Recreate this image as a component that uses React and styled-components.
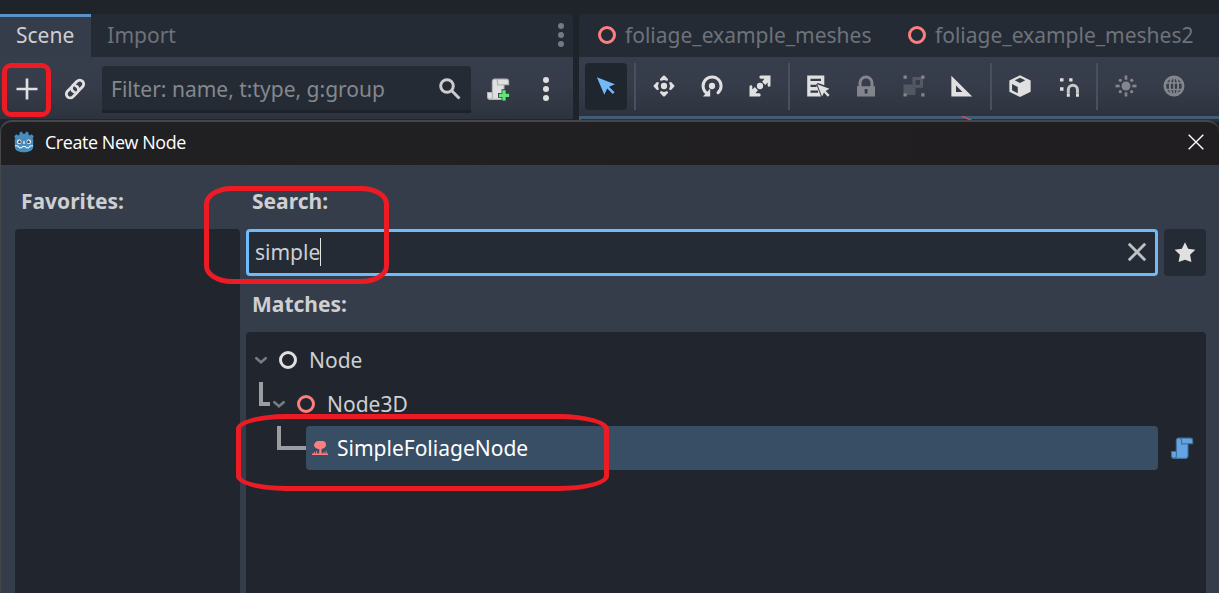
import React from "react";
import styled, { createGlobalStyle } from "styled-components";

const Global = createGlobalStyle`
  * { box-sizing: border-box; }
  body { margin: 0; background: #1f242c; overflow: hidden; }
`;

const c = {
  window: "#1f242b",
  tabBar: "#252b34",
  panel: "#363d4a",
  list: "#21262e",
  text: "#cdcfd2",
  muted: "#6d727b",
  accent: "#70bafa",
  icon: "#e0e0e0",
  node3d: "#fc7f7f",
  red: "#ed1c24",
};

const Editor = styled.div`
  position: relative;
  width: 1219px;
  height: 593px;
  overflow: hidden;
  padding-top: 14px;
  display: flex;
  align-items: flex-start;
  gap: 6px;
  background: ${c.window};
  color: ${c.text};
  font: 21px/30px "Noto Sans", sans-serif;
  white-space: nowrap;
`;

const Dock = styled.section`
  flex: ${(p) => (p.$width ? `0 0 ${p.$width}px` : "1 1 0")};
  min-width: 0;
  height: 108px;
  display: flex;
  flex-direction: column;
  overflow: hidden;
  border-radius: ${(p) => (p.$width ? "0 5px 0 0" : "5px 0 0 0")};
`;

const TabBar = styled.div`
  height: 43px;
  display: flex;
  background: ${c.tabBar};
`;

const DockTab = styled.div`
  display: flex;
  align-items: center;
  padding: ${(p) => (p.$active ? "0 17px 4px 16px" : "0 16px 1px")};
  color: ${(p) => (p.$active ? c.text : c.muted)};
  background: ${(p) => (p.$active ? c.panel : "transparent")};
  border-top: ${(p) => (p.$active ? "3px solid #5792c9" : "0")};
`;

const SceneTab = styled.div`
  width: 310px;
  padding: 0 0 1px 16px;
  display: flex;
  align-items: center;
  gap: 6px;
  color: ${c.muted};
`;

const TabMenu = styled.div`
  margin-left: auto;
  width: 24px;
  padding-bottom: 1px;
  display: flex;
  align-items: center;
`;

const Toolbar = styled.div`
  flex: 1;
  display: flex;
  align-items: flex-start;
  gap: ${(p) => p.$gap || 0}px;
  padding: ${(p) => p.$pad};
  background: linear-gradient(#373e4b 0, #363c49 45%, #2d333e 100%);
`;

const ToolButton = styled.div`
  width: ${(p) => p.$width || 42}px;
  height: 47px;
  padding-bottom: 1px;
  flex: none;
  display: flex;
  align-items: center;
  justify-content: center;
  border-radius: 4px;
  background: ${(p) => (p.$pressed ? "#20262e" : "transparent")};
  opacity: ${(p) => (p.$disabled ? 0.45 : 1)};
`;

const Separator = styled.div`
  width: 4px;
  height: 47px;
  flex: none;
  border: solid transparent;
  border-width: 0 1px;
  background: #4a505c;
  background-clip: padding-box;
`;

const FilterField = styled.div`
  width: 369px;
  height: 47px;
  margin-left: 3px;
  display: flex;
  align-items: center;
  justify-content: space-between;
  padding: 2px 9px 0;
  border-radius: 4px 4px 0 0;
  border-bottom: 3px solid #1d222a;
  background: ${c.tabBar};
  color: #84888e;
`;

const ViewportEdge = styled.div`
  height: 6px;
  flex: none;
  padding-left: 380px;
  border-top: 3px solid #3f5d76;
  border-left: 2px solid #3f5d76;
  background: #2c3035;
`;

const DockEdge = styled.div`
  height: 3px;
  flex: none;
  background: #20252d;
`;

const Dialog = styled.div`
  position: absolute;
  left: 0;
  top: 120px;
  width: 1219px;
  height: 480px;
  border: 1px solid #454648;
  border-top-width: 2px;
  border-right-width: 0;
  border-radius: 12px 12px 0 0;
  overflow: hidden;
  background: ${c.panel};
`;

const TitleBar = styled.header`
  height: 43px;
  display: flex;
  align-items: center;
  padding: 0 15px 3px 12px;
  background: linear-gradient(90deg, #202022, #211e21);
  color: #fff;
`;

const Title = styled.h1`
  margin: 0 auto 0 10px;
  font: 400 17.9px/24px "Open Sans", "Noto Sans", sans-serif;
  letter-spacing: -0.4px;
`;

const Body = styled.div`
  display: grid;
  grid-template-columns: 225px 960px;
  column-gap: 6px;
  padding: 21px 0 0 14px;
`;

const Column = styled.div`
  display: flex;
  flex-direction: column;
`;

const Label = styled.h2`
  margin: 0;
  padding: 0 0 0 6px;
  height: 43px;
  font-size: 21px;
  font-weight: 700;
  line-height: 30px;
`;

const MatchesLabel = styled(Label)`
  height: 56px;
  padding-top: 13px;
`;

const Panel = styled.div`
  height: ${(p) => p.$height}px;
  padding: 6px;
  border-radius: 4px 4px 0 0;
  background: ${c.list};
`;

const SearchRow = styled.div`
  display: flex;
  gap: 6px;
  height: 47px;
`;

const SearchField = styled.div`
  width: 912px;
  display: flex;
  align-items: center;
  padding: 0 6px 1px;
  border: 3px solid ${c.accent};
  border-radius: 4px;
  background: ${c.tabBar};
`;

const Caret = styled.span`
  width: 1px;
  height: 28px;
  margin-right: auto;
  background: #e3e4e6;
`;

const FavoriteButton = styled.div`
  width: 42px;
  padding-bottom: 1px;
  display: flex;
  align-items: center;
  justify-content: center;
  border-radius: 4px;
  background: ${c.tabBar};
`;

const Row = styled.div`
  height: 44px;
  display: flex;
  align-items: center;
`;

const Branch = styled.span`
  align-self: flex-start;
  width: ${(p) => p.$width}px;
  height: 24px;
  margin-left: ${(p) => p.$indent}px;
  border: solid #9b9da0;
  border-width: 0 0 4px 4px;
`;

const NodeIcon = styled.span`
  margin: 0 9px 0 6px;
`;

const Selected = styled.div`
  width: 852px;
  height: 44px;
  margin-right: 12px;
  padding-left: 5px;
  display: flex;
  align-items: center;
  gap: 8px;
  border-radius: 4px;
  background: #384e65;
  color: #fff;
`;

const Highlight = styled.div`
  position: absolute;
  left: ${(p) => p.$x}px;
  top: ${(p) => p.$y}px;
  width: ${(p) => p.$w}px;
  height: ${(p) => p.$h}px;
  border: 5px solid ${c.red};
  border-radius: ${(p) => p.$radius};
`;

const Glyph = styled.svg`
  display: block;
  flex: none;
`;

const Icon = ({ children, size = 24, ...rest }) => (
  <Glyph width={size} height={size} viewBox="0 0 16 16" fill={c.icon} {...rest}>
    {children}
  </Glyph>
);

const Ring = ({ color }) => (
  <Icon>
    <circle cx="8" cy="8" r="5" fill="none" stroke={color} strokeWidth="2" />
  </Icon>
);

const Dots = ({ color }) => (
  <Icon fill={color}>
    <circle cx="8" cy="2" r="2" />
    <circle cx="8" cy="8" r="2" />
    <circle cx="8" cy="14" r="2" />
  </Icon>
);

const AddIcon = () => (
  <Icon><path d="M7.1 1v6.1H1v1.8h6.1V15h1.8V8.9H15V7.1H8.9V1z" /></Icon>
);

const LinkIcon = () => (
  <Icon>
    <g fill="none" stroke={c.icon} strokeWidth="1.9" strokeLinecap="round" transform="rotate(-45 8 8)">
      <path d="M9.1 10.5H12.6a2.6 2.6 0 0 0 0-5.2H8.4a2.6 2.6 0 0 0-2.2 3.9" />
      <path d="M6.9 5.5H3.4a2.6 2.6 0 0 0 0 5.2H7.6a2.6 2.6 0 0 0 2.2-3.9" />
    </g>
  </Icon>
);

const SearchIcon = () => (
  <Icon>
    <g fill="none" stroke="#cbccce" strokeWidth="2">
      <circle cx="6" cy="6" r="4.2" />
      <path d="m9 9 5.3 5.3" />
    </g>
  </Icon>
);

const ScriptShape = ({ fill, edge }) => (
  <>
    <path d="M6 1.4h7.5a1.6 1.6 0 0 1 1.6 1.6v2.2H12v8a1.7 1.7 0 0 1-1.7 1.7H2.7A1.7 1.7 0 0 1 1 13.2V10.3h3.2V3A1.7 1.6 0 0 1 6 1.4z" fill={fill} stroke={edge} strokeWidth=".7" />
    <path d="M4.3 10v3.2a1.5 1.5 0 0 1-1.5 1.6M6 1.5a1.5 1.5 0 0 1 1.7 1.5v2.2H12" fill="none" stroke={edge} strokeWidth=".8" />
  </>
);

const ScriptAddIcon = () => (
  <Icon>
    <ScriptShape fill="#e0e0e0" edge="#b2b4b6" />
    <path d="M10.4 8.2h3.2v2.4H16v3.2h-2.4v2.2h-3.2v-2.2H8v-3.2h2.4z" fill="#343a46" />
    <path d="M10.9 8.8h2.2v2.3h2.3v2.2h-2.3v2.3h-2.2v-2.3H8.6v-2.2h2.3z" fill="#5fe878" />
  </Icon>
);

const SelectIcon = () => (
  <Icon fill={c.accent}><path d="m1.9 2.1 5 11.7 1.9-4.1 3.7 3.7 1.2-1.2-3.7-3.7L14 6.9z" /></Icon>
);

const MoveIcon = () => (
  <Icon>
    <circle cx="8" cy="8" r="2.1" />
    <g stroke={c.icon} strokeWidth="1.6" strokeLinejoin="round">
      {[0, 90, 180, 270].map((a) => (
        <path key={a} d="M6.1 3.7 8 1.8l1.9 1.9L8 3z" transform={`rotate(${a} 8 8)`} />
      ))}
    </g>
  </Icon>
);

const RotateIcon = () => (
  <Icon>
    <circle cx="8" cy="8" r="2.1" />
    <path d="M4 12.4A6 6 0 1 1 12 12.5" fill="none" stroke={c.icon} strokeWidth="2" strokeLinecap="round" />
    <path d="M6.8 9.6V15H2z" />
  </Icon>
);

const ScaleIcon = () => (
  <Icon>
    <circle cx="8" cy="8" r="2.1" />
    {[0, 180].map((a) => (
      <path key={a} d="M8.6 1H15v6.400a.9.9 0 0 1-1.900.3V5.700l-1.600 1.600-2.100-2.100L11 3.100H8.600A1 1 0 0 1 8.600 1z" transform={`rotate(${a} 8 8)`} />
    ))}
  </Icon>
);

const ListSelectIcon = () => (
  <Icon>
    <path fillRule="evenodd" d="M.8 1h11.4v6.5L8 6 6.8 6.8 8.5 11.2 10 15H.8zM3 3.2v1.5h7V3.2zM3 7.1v1.5h4V7.1zM3 11v1.5h5V11z" />
    <path d="m7.5 6.8 3.2 8.2 1.3-2.7 2.5 2.9 1.2-1.2-2.6-2.6 2.5-1.5z" />
  </Icon>
);

const LockIcon = () => (
  <Icon>
    <path fillRule="evenodd" d="M2 8.2h1V6a5 5 0 0 1 10 0v2.2h1V15H2zM5 8.2h6V6a3 3 0 0 0-6 0zM7.1 10v3h1.9v-3z" />
  </Icon>
);

const GroupIcon = () => (
  <Icon>
    <path d="M1 1h2.2v2.2H1zM12.8 1H15v2.2h-2.2zM1 12.8h2.2V15H1zM12.8 12.8H15V15h-2.2z" />
    <g opacity=".4">
      <path d="M1 7h6.5v2.2H9V14H3.2v-1.2H1z" />
      <path fillRule="evenodd" d="M7 2h5.8v1.2H14V9.2H7.5V7H7zM9 4v3.2h3V4z" />
    </g>
  </Icon>
);

const RulerIcon = () => (
  <Icon><path fillRule="evenodd" d="M.9 1.2 14.8 15H.9zM4 7.7V12h4.3z" /></Icon>
);

const CubeIcon = () => (
  <Icon>
    <path fillRule="evenodd" d="m8 .8 7.1 3.5v7.6L8 15.3.9 11.9V4.3zM8 2.5 4.5 4.2 8 6l3.5-1.8zM2.7 6.7v4.2l3.8 1.9V8.6z" />
  </Icon>
);

const SnapIcon = () => (
  <Icon>
    <path d="M2.7 2.8H5V5H2.7zM8.8 2.8H11V5H8.8zM2.7 8.9H5v2.2H2.7z" />
    <path d="M8.2 13v-2.5a3 3 0 0 1 6.1 0V13" fill="none" stroke="#c6c8cb" strokeWidth="2" />
    <path d="M7.2 13h2v2.2h-2zM13.3 13h2v2.2h-2z" />
  </Icon>
);

const SunIcon = () => (
  <Icon>
    <circle cx="8" cy="8" r="3" />
    {[0, 90, 180, 270].map((a) => (
      <g key={a} transform={`rotate(${a} 8 8)`}>
        <path d="M7.1 1h1.8v2.8H7.1z" />
        <circle cx="11.8" cy="4.2" r="1.1" />
      </g>
    ))}
  </Icon>
);

const GlobeIcon = () => (
  <Icon>
    <g fill="none" stroke={c.icon}>
      <circle cx="8" cy="8" r="6.1" strokeWidth="1.8" />
      <ellipse cx="8" cy="8" rx="2.8" ry="6" strokeWidth="1.3" />
      <path d="M8 2v12M2 6h12M2 10.3h12" strokeWidth="1.1" />
    </g>
  </Icon>
);

const GodotIcon = () => (
  <Glyph width="22" height="22" viewBox="0 0 22 22">
    <path d="M6.5 1.6 8.8.5l1.1 2.2h2.2L13.2.5l2.3 1.1v2l1.2.8 2.1-1.1 2 2.2-1.2 2 .6 1v7.2c0 3.9-4.4 5.6-9.2 5.600s-9.200-1.700-9.200-5.600V8.500l.6-1-1.200-2 2-2.200 2.100 1.100 1.200-.8z" fill="#478cbf" />
    <circle cx="6.2" cy="10.8" r="2.2" fill="#fff" />
    <circle cx="15.8" cy="10.8" r="2.2" fill="#fff" />
    <circle cx="6.5" cy="10.9" r="1.3" fill="#414042" />
    <circle cx="15.5" cy="10.9" r="1.3" fill="#414042" />
    <path d="M10.4 10.2h1.2v2.8h-1.2z" fill="#fff" />
    <path d="m2 14.7 3.5.4.5 1.7h2.9l.4-1.3h3.4l.4 1.3H16l.5-1.7 3.5-.4" fill="none" stroke="#fff" strokeWidth="1" />
  </Glyph>
);

const CloseIcon = () => (
  <Glyph width="16" height="16" viewBox="0 0 16 16">
    <path d="m.7.7 14.6 14.6M15.3.7.7 15.3" stroke="#fff" strokeWidth="1.4" />
  </Glyph>
);

const ClearIcon = () => (
  <Icon><path d="m3.2 3.2 9.6 9.6M12.8 3.2 3.2 12.8" stroke="#bfc1c4" strokeWidth="1.9" strokeLinecap="square" /></Icon>
);

const StarIcon = () => (
  <Icon><path d="m8 1.5 2.1 4.3 4.8.7-3.5 3.4.9 4.8L8 13.1l-4.3 1.6.9-4.8L1.1 6.5l4.8-.7z" /></Icon>
);

const ArrowIcon = () => (
  <Glyph width="18" height="18" viewBox="0 0 18 18">
    <path d="m4.3 7.2 4.7 4 4.7-4" fill="none" stroke="#777b82" strokeWidth="2.6" strokeLinecap="round" />
  </Glyph>
);

const FoliageIcon = () => (
  <Glyph width="18" height="18" viewBox="0 0 18 18" fill={c.node3d}>
    <path d="M5 2.8 6.500 2h5.500l2 .8 1 2-.2 2.400-1.500 1.800-2.800 1v3.500l1 1.200H7.300l1-1.200V10.200L5 9.300 3.300 7.500 3 5.200z" />
    <path d="M1 14.600h16V16H1zM3 12.800h.9v2H3zM5.200 12h.9v3h-.9zM12.500 13h.9v2h-.9zM14.600 12h.9v3h-.9z" />
  </Glyph>
);

const AxisLine = styled(Glyph)`
  margin-top: -3px;
`;

export default function App() {
  return (
    <>
      <Global />
      <Editor>
        <Dock $width={573}>
          <TabBar>
            <DockTab $active>Scene</DockTab>
            <DockTab>Import</DockTab>
            <TabMenu><Dots color="#747a83" /></TabMenu>
          </TabBar>
          <Toolbar $pad="9px 0 0 3px">
            <ToolButton $width={48}><AddIcon /></ToolButton>
            <ToolButton $width={48}><LinkIcon /></ToolButton>
            <FilterField>
              Filter: name, t:type, g:group
              <SearchIcon />
            </FilterField>
            <ToolButton $width={54}><ScriptAddIcon /></ToolButton>
            <ToolButton><Dots color={c.icon} /></ToolButton>
          </Toolbar>
          <DockEdge />
        </Dock>
        <Dock>
          <TabBar>
            <SceneTab><Ring color={c.node3d} />foliage_example_meshes</SceneTab>
            <SceneTab><Ring color={c.node3d} />foliage_example_meshes2</SceneTab>
          </TabBar>
          <Toolbar $gap={6} $pad="6px 0 0 6px">
            <ToolButton $pressed><SelectIcon /></ToolButton>
            <Separator />
            <ToolButton><MoveIcon /></ToolButton>
            <ToolButton><RotateIcon /></ToolButton>
            <ToolButton><ScaleIcon /></ToolButton>
            <Separator />
            <ToolButton><ListSelectIcon /></ToolButton>
            <ToolButton $disabled><LockIcon /></ToolButton>
            <ToolButton $disabled><GroupIcon /></ToolButton>
            <ToolButton><RulerIcon /></ToolButton>
            <Separator />
            <ToolButton><CubeIcon /></ToolButton>
            <ToolButton><SnapIcon /></ToolButton>
            <Separator />
            <ToolButton $disabled><SunIcon /></ToolButton>
            <ToolButton $disabled><GlobeIcon /></ToolButton>
          </Toolbar>
          <ViewportEdge>
            <AxisLine width="18" height="6" viewBox="0 0 18 6">
              <path d="M0-.5 14 6" stroke="#b8506a" strokeWidth="1.6" />
            </AxisLine>
          </ViewportEdge>
        </Dock>

        <Dialog>
          <TitleBar>
            <GodotIcon />
            <Title>Create New Node</Title>
            <CloseIcon />
          </TitleBar>
          <Body>
            <Column>
              <Label>Favorites:</Label>
              <Panel $height={380} />
            </Column>
            <Column>
              <Label>Search:</Label>
              <SearchRow>
                <SearchField>
                  simple
                  <Caret />
                  <ClearIcon />
                </SearchField>
                <FavoriteButton><StarIcon /></FavoriteButton>
              </SearchRow>
              <MatchesLabel>Matches:</MatchesLabel>
              <Panel $height={280}>
                <Row>
                  <ArrowIcon />
                  <NodeIcon><Ring color={c.icon} /></NodeIcon>
                  Node
                </Row>
                <Row>
                  <Branch $indent={7} $width={11} />
                  <ArrowIcon />
                  <NodeIcon><Ring color={c.node3d} /></NodeIcon>
                  Node3D
                </Row>
                <Row>
                  <Branch $indent={25} $width={29} />
                  <Selected>
                    <FoliageIcon />
                    SimpleFoliageNode
                  </Selected>
                  <Icon><ScriptShape fill="#64a4e2" edge="#41719f" /></Icon>
                </Row>
              </Panel>
            </Column>
          </Body>
        </Dialog>

        <Highlight $x={2} $y={63} $w={49} $h={54} $radius="9px" />
        <Highlight $x={204} $y={186} $w={185} $h={98} $radius="28px / 18px" />
        <Highlight $x={236} $y={414} $w={373} $h={77} $radius="50px / 15px" />
      </Editor>
    </>
  );
}
